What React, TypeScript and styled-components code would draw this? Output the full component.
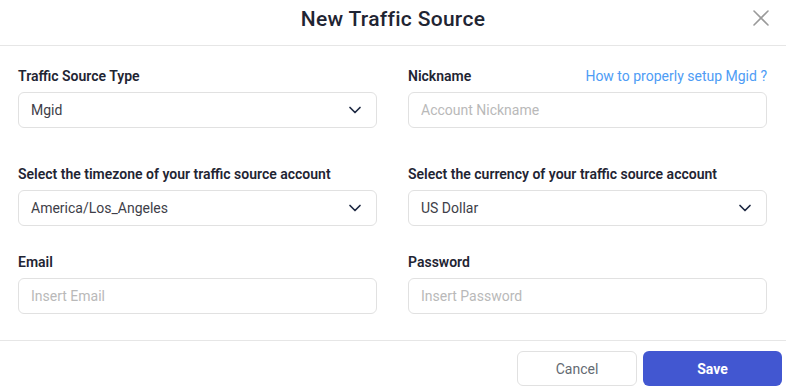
import styled, { createGlobalStyle } from "styled-components";

const GlobalStyle = createGlobalStyle`
  html, body {
    margin: 0;
    padding: 0;
    background: #ffffff;
  }
  body {
    font-family: Roboto, "Liberation Sans", Arial, sans-serif;
    -webkit-font-smoothing: antialiased;
  }
  * {
    box-sizing: border-box;
  }
`;

type Field = {
  label: string;
  kind: "select" | "input";
  value?: string;
  placeholder?: string;
  link?: string;
};

const rows: Field[][] = [
  [
    { label: "Traffic Source Type", kind: "select", value: "Mgid" },
    {
      label: "Nickname",
      kind: "input",
      placeholder: "Account Nickname",
      link: "How to properly setup Mgid ?",
    },
  ],
  [
    {
      label: "Select the timezone of your traffic source account",
      kind: "select",
      value: "America/Los_Angeles",
    },
    {
      label: "Select the currency of your traffic source account",
      kind: "select",
      value: "US Dollar",
    },
  ],
  [
    { label: "Email", kind: "input", placeholder: "Insert Email" },
    { label: "Password", kind: "input", placeholder: "Insert Password" },
  ],
];

function Chevron() {
  return (
    <svg width="14" height="14" viewBox="0 0 14 14" fill="none">
      <path
        d="M2 4.5L7 9.5L12 4.5"
        stroke="#1f2a44"
        strokeWidth="1.7"
        strokeLinecap="round"
        strokeLinejoin="round"
      />
    </svg>
  );
}

export default function App() {
  return (
    <>
      <GlobalStyle />
      <Modal>
        <Header>
          <Title>New Traffic Source</Title>
          <CloseBtn aria-label="close">
            <svg width="16" height="16" viewBox="0 0 16 16" fill="none">
              <path
                d="M1 1L15 15M15 1L1 15"
                stroke="#9a9a9a"
                strokeWidth="1.6"
                strokeLinecap="round"
              />
            </svg>
          </CloseBtn>
        </Header>

        <Body>
          {rows.map((row, i) => (
            <Row key={i} $first={i === 0}>
              {row.map((field) => (
                <FieldBox key={field.label}>
                  <LabelRow>
                    <Label>{field.label}</Label>
                    {field.link && <HelpLink href="#">{field.link}</HelpLink>}
                  </LabelRow>
                  {field.kind === "select" ? (
                    <SelectBox>
                      <span>{field.value}</span>
                      <Chevron />
                    </SelectBox>
                  ) : (
                    <TextInput placeholder={field.placeholder} />
                  )}
                </FieldBox>
              ))}
            </Row>
          ))}
        </Body>

        <Footer>
          <CancelButton>Cancel</CancelButton>
          <SaveButton>Save</SaveButton>
        </Footer>
      </Modal>
    </>
  );
}

const Modal = styled.div`
  width: 786px;
  height: 389px;
  background: #fff;
  display: flex;
  flex-direction: column;
  overflow: hidden;
`;

const Header = styled.div`
  position: relative;
  height: 46px;
  border-bottom: 1px solid #e6e6e6;
  display: flex;
  align-items: center;
  justify-content: center;
  padding-bottom: 8px;
`;

const Title = styled.h2`
  margin: 0;
  font-size: 21px;
  font-weight: 500;
  color: #1f2533;
  letter-spacing: 0.3px;
`;

const CloseBtn = styled.button`
  position: absolute;
  right: 16px;
  top: 9px;
  border: none;
  background: none;
  padding: 0;
  width: 18px;
  height: 18px;
  display: flex;
  align-items: center;
  justify-content: center;
  cursor: pointer;
`;

const Body = styled.div`
  padding: 20px 18px 26px 18px;
  border-bottom: 1px solid #e6e6e6;
  display: flex;
  flex-direction: column;
`;

const Row = styled.div<{ $first?: boolean }>`
  display: grid;
  grid-template-columns: 359px 359px;
  column-gap: 31px;
  margin-bottom: ${(p) => (p.$first ? "36px" : "26px")};

  &:last-child {
    margin-bottom: 0;
  }
`;

const FieldBox = styled.div`
  display: flex;
  flex-direction: column;
  gap: 6px;
`;

const LabelRow = styled.div`
  display: flex;
  align-items: center;
  justify-content: space-between;
  height: 20px;
`;

const Label = styled.label`
  font-size: 14px;
  font-weight: 600;
  color: #1f2533;
`;

const HelpLink = styled.a`
  font-size: 14px;
  color: #4e9cf5;
  text-decoration: none;
`;

const SelectBox = styled.div`
  height: 36px;
  border: 1px solid #e1e1e1;
  border-radius: 6px;
  padding: 0 12px 0 12px;
  display: flex;
  align-items: center;
  justify-content: space-between;
  font-size: 14px;
  color: #3e3e48;

  svg {
    margin-right: 2px;
  }
`;

const TextInput = styled.input`
  height: 36px;
  border: 1px solid #e1e1e1;
  border-radius: 6px;
  padding: 0 12px;
  font-family: inherit;
  font-size: 14px;
  color: #3e3e48;
  outline: none;

  &::placeholder {
    color: #b9b9b9;
  }
`;

const Footer = styled.div`
  display: flex;
  justify-content: flex-end;
  gap: 6px;
  padding: 10px 4px 0 0;
`;

const BaseButton = styled.button`
  height: 35px;
  border-radius: 6px;
  font-family: inherit;
  font-size: 14px;
  cursor: pointer;
`;

const CancelButton = styled(BaseButton)`
  width: 120px;
  background: #fff;
  border: 1px solid #e1e1e1;
  color: #646a72;
`;

const SaveButton = styled(BaseButton)`
  width: 139px;
  background: #4257d1;
  border: none;
  color: #fff;
  font-weight: 700;
`;
